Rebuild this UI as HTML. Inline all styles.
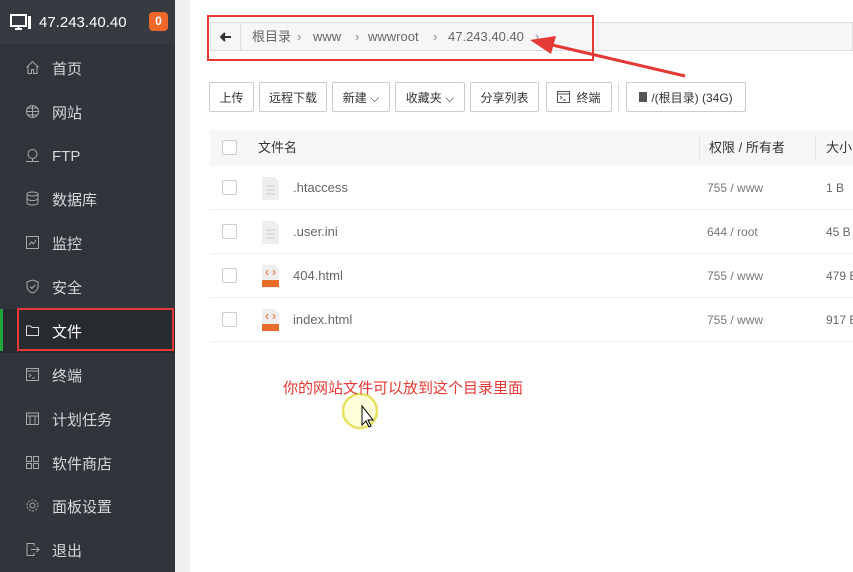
<!DOCTYPE html>
<html><head><meta charset="utf-8"><style>
*{margin:0;padding:0;box-sizing:border-box}
body{width:853px;height:572px;overflow:hidden;background:#f0f0f0;font-family:"Liberation Sans","Noto Sans CJK SC",sans-serif;position:relative}
.side{position:absolute;left:0;top:0;width:175px;height:572px;background:#30353b}
.head{height:44px;background:#363b41;color:#fff;font-size:15px;display:flex;align-items:center;padding-left:10px}
.badge{position:absolute;left:149px;top:12px;width:19px;height:19px;background:#f0672a;border-radius:4px;color:#fff;font-size:12px;text-align:center;line-height:19px;font-weight:bold}
.mi{position:absolute;left:0;width:175px;height:44px;color:#d6d8da;font-size:15px;display:flex;align-items:center;padding-left:52px}
.mi svg{position:absolute;left:25px;top:14px}
.act{background:#272b30;color:#fff}
.main{position:absolute;left:190px;top:0;width:663px;height:572px;background:#fff}
.bc{position:absolute;left:210px;top:22px;width:643px;height:29px;border:1px solid #ddd;background:#f6f6f6;font-size:13px;color:#666}
.bc span{position:absolute;top:0;line-height:27px;white-space:nowrap}
.bc .bk{position:absolute;left:0;top:0;width:30px;height:27px;border-right:1px solid #ddd;display:flex;align-items:center;justify-content:center}
.btn{position:absolute;top:82px;height:30px;border:1px solid #ccc;border-radius:2px;background:#fff;font-size:12px;color:#333;display:flex;align-items:center;justify-content:center;white-space:nowrap}
.th{position:absolute;left:210px;top:130px;width:643px;height:36px;background:#f6f6f6;font-size:13px;color:#333}
.row{position:absolute;left:210px;width:643px;height:44px;border-bottom:1px solid #eee;font-size:13px;color:#666}
.cb{position:absolute;left:12px;top:14px;width:15px;height:15px;border:1px solid #ccc;border-radius:2px;background:#fff}
.t{position:absolute;top:0;line-height:44px;white-space:nowrap}
</style></head><body>
<div class="side">
<div class="head"><svg width="22" height="18" viewBox="0 0 22 18"><rect x="1" y="2" width="15" height="11" fill="none" stroke="#fff" stroke-width="2"/><path d="M5 16h7M8.5 13v3" stroke="#fff" stroke-width="2"/><rect x="18" y="3" width="3" height="13" fill="#fff"/></svg><span style="margin-left:7px">47.243.40.40</span></div>
<div class="badge">0</div>
<div class="mi" style="top:46px"><svg width="15" height="15" viewBox="0 0 15 15" fill="none" stroke="#aaa"><path d="M1.5 7.5L7.5 1.5 13.5 7.5M3 6v7.5h3.5v-4h2v4H12V6"/></svg>首页</div>
<div class="mi" style="top:90px"><svg width="15" height="15" viewBox="0 0 15 15" fill="none" stroke="#aaa"><circle cx="7.5" cy="7.5" r="6"/><path d="M1.5 7.5h12M7.5 1.5v12M3 4h9M3 11h9"/></svg>网站</div>
<div class="mi" style="top:134px"><svg width="15" height="15" viewBox="0 0 15 15" fill="none" stroke="#aaa"><circle cx="7.5" cy="6" r="4.5"/><path d="M1 13.5h13M7.5 10.5v3"/></svg>FTP</div>
<div class="mi" style="top:177px"><svg width="15" height="15" viewBox="0 0 15 15" fill="none" stroke="#aaa"><ellipse cx="7.5" cy="3" rx="5.5" ry="2"/><path d="M2 3v9c0 1.1 2.5 2 5.5 2s5.5-.9 5.5-2V3M2 7.5c0 1.1 2.5 2 5.5 2s5.5-.9 5.5-2"/></svg>数据库</div>
<div class="mi" style="top:221px"><svg width="15" height="15" viewBox="0 0 15 15" fill="none" stroke="#aaa"><rect x="1.5" y="1.5" width="12" height="12"/><path d="M4 10l2.5-3 2 2L11 5"/></svg>监控</div>
<div class="mi" style="top:265px"><svg width="15" height="15" viewBox="0 0 15 15" fill="none" stroke="#aaa"><path d="M7.5 1L13 3v4c0 3.5-2.5 6-5.5 7C4.5 13 2 10.5 2 7V3z M5 7.5l2 2 3-3.5"/></svg>安全</div>
<div class="mi act" style="top:309px"><svg width="15" height="15" viewBox="0 0 15 15" fill="none" stroke="#ddd"><path d="M1.5 3h4l1.5 1.5h6.5v8h-12z"/></svg>文件</div>
<div style="position:absolute;left:0;top:309px;width:3px;height:42px;background:#20a53a"></div>
<div style="position:absolute;left:17px;top:308px;width:157px;height:43px;border:2px solid #e53935"></div>
<div class="mi" style="top:353px"><svg width="15" height="15" viewBox="0 0 15 15" fill="none" stroke="#aaa"><rect x="1.5" y="1.5" width="12" height="12"/><path d="M1.5 4h12M4 7l2 1.5L4 10M7 11h3"/></svg>终端</div>
<div class="mi" style="top:397px"><svg width="15" height="15" viewBox="0 0 15 15" fill="none" stroke="#aaa"><rect x="1.5" y="2" width="12" height="11.5"/><path d="M1.5 5h12M5 5v8.5M10 5v8.5"/></svg>计划任务</div>
<div class="mi" style="top:441px"><svg width="15" height="15" viewBox="0 0 15 15" fill="none" stroke="#aaa"><rect x="1.5" y="1.5" width="5" height="5"/><rect x="8.5" y="1.5" width="5" height="5"/><rect x="1.5" y="8.5" width="5" height="5"/><rect x="8.5" y="8.5" width="5" height="5"/></svg>软件商店</div>
<div class="mi" style="top:484px"><svg width="15" height="15" viewBox="0 0 15 15" fill="none" stroke="#aaa"><circle cx="7.5" cy="7.5" r="2.5"/><circle cx="7.5" cy="7.5" r="5.5" stroke-dasharray="2 1.5"/></svg>面板设置</div>
<div class="mi" style="top:528px"><svg width="15" height="15" viewBox="0 0 15 15" fill="none" stroke="#aaa"><path d="M9 4V1.5H2v12h7V11M6 7.5h8M11.5 5l2.5 2.5-2.5 2.5"/></svg>退出</div>
</div>
<div class="main"></div>
<div class="bc"><div class="bk"><svg width="12" height="10" viewBox="0 0 12 10"><path d="M11 5H4M5 1L1 5l4 4" stroke="#333" stroke-width="2" fill="#333"/></svg></div>
<span style="left:41px">根目录</span><span style="left:86px;color:#888">›</span><span style="left:102px">www</span><span style="left:144px;color:#888">›</span><span style="left:157px">wwwroot</span><span style="left:222px;color:#888">›</span><span style="left:237px">47.243.40.40</span><span style="left:324px;color:#888">›</span></div>
<div style="position:absolute;left:207px;top:15px;width:387px;height:46px;border:2px solid #e53935"></div>
<svg style="position:absolute;left:0;top:0" width="853" height="572"><path d="M685 76L548 44" stroke="#e53935" stroke-width="3"/><path d="M530 40l26-4-5 18z" fill="#e53935"/>
<circle cx="360" cy="411" r="17" fill="rgba(255,255,150,.35)" stroke="#e8e060" stroke-width="2.5"/>
<path d="M362 406v19l4-4 3 6 2-1-3-6h5z" fill="#fff" stroke="#000"/></svg>
<div class="btn" style="left:209px;width:45px">上传</div>
<div class="btn" style="left:259px;width:68px">远程下载</div>
<div class="btn" style="left:332px;width:58px">新建 ⌵</div>
<div class="btn" style="left:395px;width:70px">收藏夹 ⌵</div>
<div class="btn" style="left:470px;width:69px">分享列表</div>
<div class="btn" style="left:546px;width:66px"><svg width="13" height="12" viewBox="0 0 13 12" fill="none" stroke="#555" style="margin-right:6px"><rect x=".5" y=".5" width="12" height="11"/><path d="M.5 3h12M3 5l2 1.5L3 8M6 9h3"/></svg>终端</div>
<div style="position:absolute;left:618px;top:82px;width:1px;height:30px;background:#ddd"></div>
<div class="btn" style="left:626px;width:120px"><span style="display:inline-block;width:8px;height:10px;background:#555;margin-right:4px"></span>/(根目录) (34G)</div>
<div class="th"><div class="cb" style="top:10px"></div><span class="t" style="left:48px;line-height:36px">文件名</span><div style="position:absolute;left:489px;top:6px;width:1px;height:24px;background:#e5e5e5"></div><span class="t" style="left:499px;line-height:36px">权限 / 所有者</span><div style="position:absolute;left:605px;top:6px;width:1px;height:24px;background:#e5e5e5"></div><span class="t" style="left:616px;line-height:36px">大小</span></div>
<div class="row" style="top:166px"><div class="cb"></div><svg class="t" style="left:52px;top:11px" width="17" height="23"><path d="M0 0h13l4 4v19H0z" fill="#eee"/><path d="M4 9h9M4 13h9M4 17h9" stroke="#ccc"/></svg><span class="t" style="left:83px">.htaccess</span><span class="t" style="left:497px;color:#777;font-size:12px">755 / www</span><span class="t" style="left:616px;font-size:12px">1 B</span></div>
<div class="row" style="top:210px"><div class="cb"></div><svg class="t" style="left:52px;top:11px" width="17" height="23"><path d="M0 0h13l4 4v19H0z" fill="#eee"/><path d="M4 9h9M4 13h9M4 17h9" stroke="#ccc"/></svg><span class="t" style="left:83px">.user.ini</span><span class="t" style="left:497px;color:#777;font-size:12px">644 / root</span><span class="t" style="left:616px;font-size:12px">45 B</span></div>
<div class="row" style="top:254px"><div class="cb"></div><svg class="t" style="left:52px;top:11px" width="17" height="23"><path d="M0 0h13l4 4v19H0z" fill="#eee"/><path d="M6 5L4 7.5 6 10M11 5l2 2.5L11 10" stroke="#e86c2a" fill="none"/><rect x="0" y="15" width="17" height="7" fill="#e86c2a"/></svg><span class="t" style="left:83px">404.html</span><span class="t" style="left:497px;color:#777;font-size:12px">755 / www</span><span class="t" style="left:616px;font-size:12px">479 B</span></div>
<div class="row" style="top:298px"><div class="cb"></div><svg class="t" style="left:52px;top:11px" width="17" height="23"><path d="M0 0h13l4 4v19H0z" fill="#eee"/><path d="M6 5L4 7.5 6 10M11 5l2 2.5L11 10" stroke="#e86c2a" fill="none"/><rect x="0" y="15" width="17" height="7" fill="#e86c2a"/></svg><span class="t" style="left:83px">index.html</span><span class="t" style="left:497px;color:#777;font-size:12px">755 / www</span><span class="t" style="left:616px;font-size:12px">917 B</span></div>
<div style="position:absolute;left:283px;top:377px;color:#e53935;font-size:15px;white-space:nowrap">你的网站文件可以放到这个目录里面</div>
</body></html>
